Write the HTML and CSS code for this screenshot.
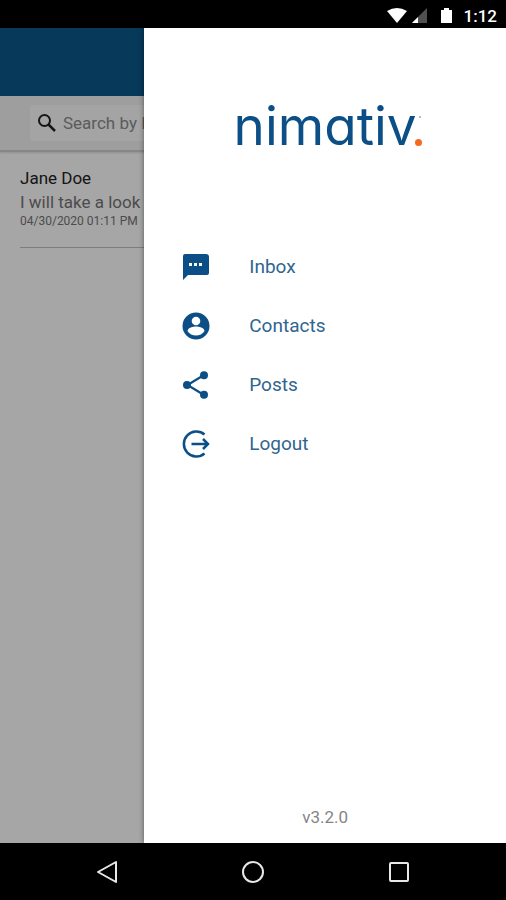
FILE: index.html
```html
<!DOCTYPE html>
<html lang="en">
<head>
<meta charset="utf-8">
<meta name="viewport" content="width=device-width, initial-scale=1">
<title>nimativ</title>
<link rel="stylesheet" href="styles.css">
</head>
<body>
<header class="status">
  <svg class="status-icons" width="78" height="18" viewBox="0 0 78 18" aria-hidden="true">
    <path fill="#fff" d="M1 4Q11-2 21 4L11 16Z"/>
    <path fill="#505050" d="M41 1V16H26Z"/>
    <path fill="#fff" d="M32 10V16H26Z"/>
    <path fill="#fff" d="M58 1h5v2h3v13H55V3h3Z"/>
  </svg>
  <time class="clock">1:12</time>
</header>
<div class="screen">
  <main class="inbox">
    <div class="appbar"></div>
    <div class="searchbar">
      <label class="search">
        <svg width="20" height="20" viewBox="0 0 20 20" fill="none" stroke="#222" stroke-width="2" aria-hidden="true"><circle cx="7.500" cy="7.500" r="5.500"/><path stroke-width="2.500" d="M11.500 11.500L18 18"/></svg>
        <input type="search" placeholder="Search by N" aria-label="Search">
      </label>
    </div>
    <article class="message">
      <h2>Jane Doe</h2>
      <p>I will take a look</p>
      <time>04/30/2020 01:11 PM</time>
    </article>
  </main>
  <div class="scrim"></div>
  <aside class="drawer">
    <div class="brand">nimativ<span class="brand-dot"></span><span class="brand-mark"></span></div>
    <nav class="menu">
      <a href="#inbox">
        <svg width="28" height="28" viewBox="0 0 28 28" aria-hidden="true"><path fill="#0b4f86" d="M3 1H24Q27 1 27 4V20Q27 22 25 22H6L1 27V3Q1 1 3 1Z"/><path fill="#fff" d="M7 10h3v3H7zM12 10h3v3h-3zM17 10h3v3h-3z"/></svg>
        <span>Inbox</span></a>
      <a href="#contacts">
        <svg width="28" height="28" viewBox="0 0 28 28" aria-hidden="true"><circle cx="14" cy="14" r="13.500" fill="#0b4f86"/><circle cx="14" cy="9" r="4.300" fill="#fff"/><path fill="#fff" d="M5.500 19C6 15.500 11 14.500 14 14.500S22 15.500 22.500 19C20.500 22 17.500 23.500 14 23.500S7.500 22 5.500 19Z"/></svg>
        <span>Contacts</span></a>
      <a href="#posts">
        <svg width="28" height="28" viewBox="0 0 28 28" aria-hidden="true"><path fill="none" stroke="#0b4f86" stroke-width="2.200" d="M22 4L5.500 14L22 24"/><g fill="#0b4f86"><circle cx="22" cy="4.200" r="4"/><circle cx="5" cy="14" r="4"/><circle cx="22" cy="23.800" r="4"/></g></svg>
        <span>Posts</span></a>
      <a href="#logout">
        <svg width="28" height="28" viewBox="0 0 28 28" fill="none" stroke="#0b4f86" stroke-width="2.500" aria-hidden="true"><path d="M22.500 4.500A12.500 12.500 0 1 0 22.500 23.500"/><path d="M9.500 14H26M21 9L26 14L21 19"/></svg>
        <span>Logout</span></a>
    </nav>
    <p class="version">v3.2.0</p>
  </aside>
</div>
<footer class="system">
  <button aria-label="Back"><svg width="24" height="24" viewBox="0 0 24 24"><path d="M21 2V22L3 12Z"/></svg></button>
  <button aria-label="Home"><svg width="24" height="24" viewBox="0 0 24 24"><circle cx="12" cy="12" r="10"/></svg></button>
  <button aria-label="Recent apps"><svg width="24" height="24" viewBox="0 0 24 24"><rect x="3" y="3" width="18" height="18" rx="1"/></svg></button>
</footer>
</body>
</html>
```
FILE: styles.css
```css
* { box-sizing: border-box; }
body {
  margin: 0;
  min-height: 100vh;
  display: flex;
  flex-direction: column;
  background: #000;
  font-family: Roboto, sans-serif;
}
h2, p { margin: 0; }
.status {
  height: 28px;
  padding: 4px 9px 0 0;
  display: flex;
  justify-content: flex-end;
  align-items: center;
  color: #fff;
}
.clock { font-size: 17px; font-weight: 500; line-height: 20px; }
.screen {
  flex: 1;
  position: relative;
  display: flex;
  overflow: hidden;
  background: #fff;
}
.inbox { flex: 1; }
.appbar { height: 68px; background: #0c588b; }
.searchbar {
  height: 56px;
  padding: 9px 30px;
  background: #f3f3f3;
  border-bottom: 2px solid #d0d0d0;
  box-shadow: 0 1px 2px #0002;
}
.search {
  height: 36px;
  padding: 0 7px;
  display: flex;
  align-items: center;
  gap: 6px;
  border-radius: 3px;
  background: #fcfcfc;
}
.search input {
  flex: 1;
  min-width: 0;
  padding: 0;
  border: 0;
  outline: 0;
  background: none;
  font: 17px/24px Roboto, sans-serif;
}
.search input::placeholder { color: #8c8c8c; }
.message {
  margin: 0 20px;
  padding: 14px 0 19px;
  border-bottom: 1px solid #c0c0c0;
  color: #757575;
}
.message h2 { color: #222; font-size: 17px; font-weight: 400; line-height: 24px; }
.message p { font-size: 17px; line-height: 24px; }
.message time { display: block; font-size: 12px; line-height: 14px; }
.scrim { position: absolute; inset: 0; background: rgba(0, 0, 0, .35); }
.drawer {
  position: absolute;
  inset: 0 0 0 auto;
  width: 71.5%;
  display: flex;
  flex-direction: column;
  background: #fff;
  box-shadow: 0 0 5px #0007;
}
.brand {
  position: relative;
  height: 68px;
  margin: 64px auto 0;
  color: #0b4f86;
  font: 400 53px/68px Inter, sans-serif;
  font-feature-settings: "cv11";
}
.brand-dot {
  position: absolute;
  right: -5px;
  bottom: 14px;
  width: 7px;
  height: 7px;
  border-radius: 50%;
  background: #f26b21;
}
.brand-mark {
  position: absolute;
  right: -4px;
  top: 24px;
  width: 2px;
  height: 2px;
  background: #bbb;
}
.menu { margin-top: 77px; }
.menu a {
  height: 59px;
  padding-left: 38px;
  display: flex;
  align-items: center;
  gap: 39px;
  color: #2f6590;
  font-size: 19px;
  line-height: 24px;
  text-decoration: none;
}
.version {
  margin: auto 0 14px;
  text-align: center;
  color: #858585;
  font-size: 17px;
  line-height: 24px;
}
.system {
  height: 57px;
  padding: 0 34px;
  display: flex;
  justify-content: space-around;
  align-items: center;
}
.system button {
  padding: 0;
  border: 0;
  background: none;
  display: flex;
}
.system svg { fill: none; stroke: #e8e8e8; stroke-width: 2; stroke-linejoin: round; }
```
